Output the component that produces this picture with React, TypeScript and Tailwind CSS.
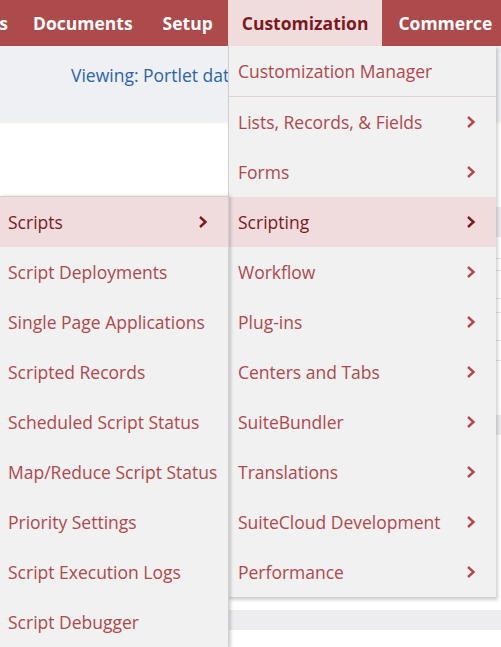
import React from "react";

const font = { fontFamily: '"Open Sans", "Noto Sans", sans-serif' };

function Chevron({ dark }: { dark?: boolean }) {
  return (
    <svg width="10" height="14" viewBox="0 0 10 14" className="shrink-0">
      <polyline
        points="2,2 7.5,7 2,12"
        fill="none"
        stroke={dark ? "#7a1a1e" : "#b0484c"}
        strokeWidth="2.4"
      />
    </svg>
  );
}

type Item = { label: string; sub?: boolean; active?: boolean; sep?: boolean };

const mainItems: Item[] = [
  { label: "Customization Manager", sep: true },
  { label: "Lists, Records, & Fields", sub: true },
  { label: "Forms", sub: true },
  { label: "Scripting", sub: true, active: true },
  { label: "Workflow", sub: true },
  { label: "Plug-ins", sub: true },
  { label: "Centers and Tabs", sub: true },
  { label: "SuiteBundler", sub: true },
  { label: "Translations", sub: true },
  { label: "SuiteCloud Development", sub: true },
  { label: "Performance", sub: true },
];

const subItems: Item[] = [
  { label: "Scripts", sub: true, active: true },
  { label: "Script Deployments" },
  { label: "Single Page Applications" },
  { label: "Scripted Records" },
  { label: "Scheduled Script Status" },
  { label: "Map/Reduce Script Status" },
  { label: "Priority Settings" },
  { label: "Script Execution Logs" },
  { label: "Script Debugger" },
];

function Row({ item }: { item: Item }) {
  return (
    <div
      className={
        "flex items-center justify-between pl-[9px] pr-[20px] text-[17.5px] " +
        (item.active ? "bg-[#f0dcdd] text-[#7a1a1e] " : "text-[#b0484c] ") +
        (item.sep ? "h-[51px] border-b border-[#e2cfd0]" : "h-[50px]")
      }
    >
      <span className="whitespace-nowrap">{item.label}</span>
      {item.sub && <Chevron dark={item.active} />}
    </div>
  );
}

export default function App() {
  return (
    <div className="relative h-[647px] w-[501px] overflow-hidden bg-white" style={font}>
      {/* nav */}
      <div className="flex h-[46px] items-center bg-[#ad4a4b] text-[17.5px] font-bold text-white">
        <div className="flex w-[18px] shrink-0 justify-end overflow-hidden">
          <span className="pr-[10px] whitespace-nowrap">Reports</span>
        </div>
        <div className="px-[15px] whitespace-nowrap">Documents</div>
        <div className="px-[15px] whitespace-nowrap">Setup</div>
        <div className="flex h-full items-center bg-[#f0dcdd] px-[14px] text-[#7a1a1e] whitespace-nowrap">
          Customization
        </div>
        <div className="px-[16px] whitespace-nowrap">Commerce</div>
      </div>
      {/* viewing bar */}
      <div className="flex h-[76px] items-start bg-[#eff0f3] pl-[71px] pt-[16px] text-[17.5px] text-[#2b63ad] shadow-[0_1px_2px_rgba(0,0,0,0.06)]">
        <span className="whitespace-nowrap">Viewing: Portlet data</span>
      </div>
      {/* background content */}
      <div className="mt-[85px] h-[30px] bg-[#ebebee]" />
      <div className="mt-[21px] h-px bg-[#e4e4e6]" />
      <div className="mt-[11px] h-px bg-[#e4e4e6]" />
      <div className="mt-[27px] h-px bg-[#e4e4e6]" />
      <div className="mt-[13px] h-px bg-[#e4e4e6]" />
      <div className="mt-[27px] h-px bg-[#e4e4e6]" />
      <div className="mt-[19px] h-px bg-[#e4e4e6]" />
      <div className="mt-[54px] h-[20px] bg-[#ebebee]" />
      <div className="mt-[175px] h-[20px] bg-[#ededf0]" />

      {/* main dropdown */}
      <div className="absolute left-[228px] top-[46px] w-[268px] border-l border-b border-[#cfcfcf] bg-[#f1f1f1] shadow-[2px_2px_3px_rgba(0,0,0,0.18)]">
        {mainItems.map((it) => (
          <Row key={it.label} item={it} />
        ))}
      </div>

      {/* sub menu */}
      <div className="absolute left-0 top-[196px] w-[229px] border-t border-r border-b border-[#cfcfcf] bg-[#f1f1f1] shadow-[2px_0_3px_rgba(0,0,0,0.18)]">
        {subItems.map((it) => (
          <div
            key={it.label}
            className={
              "flex h-[50px] items-center justify-between pl-[8px] pr-[20px] text-[17.5px] " +
              (it.active ? "bg-[#f0dcdd] text-[#7a1a1e]" : "text-[#b0484c]")
            }
          >
            <span className="whitespace-nowrap">{it.label}</span>
            {it.sub && <Chevron dark />}
          </div>
        ))}
      </div>
    </div>
  );
}
